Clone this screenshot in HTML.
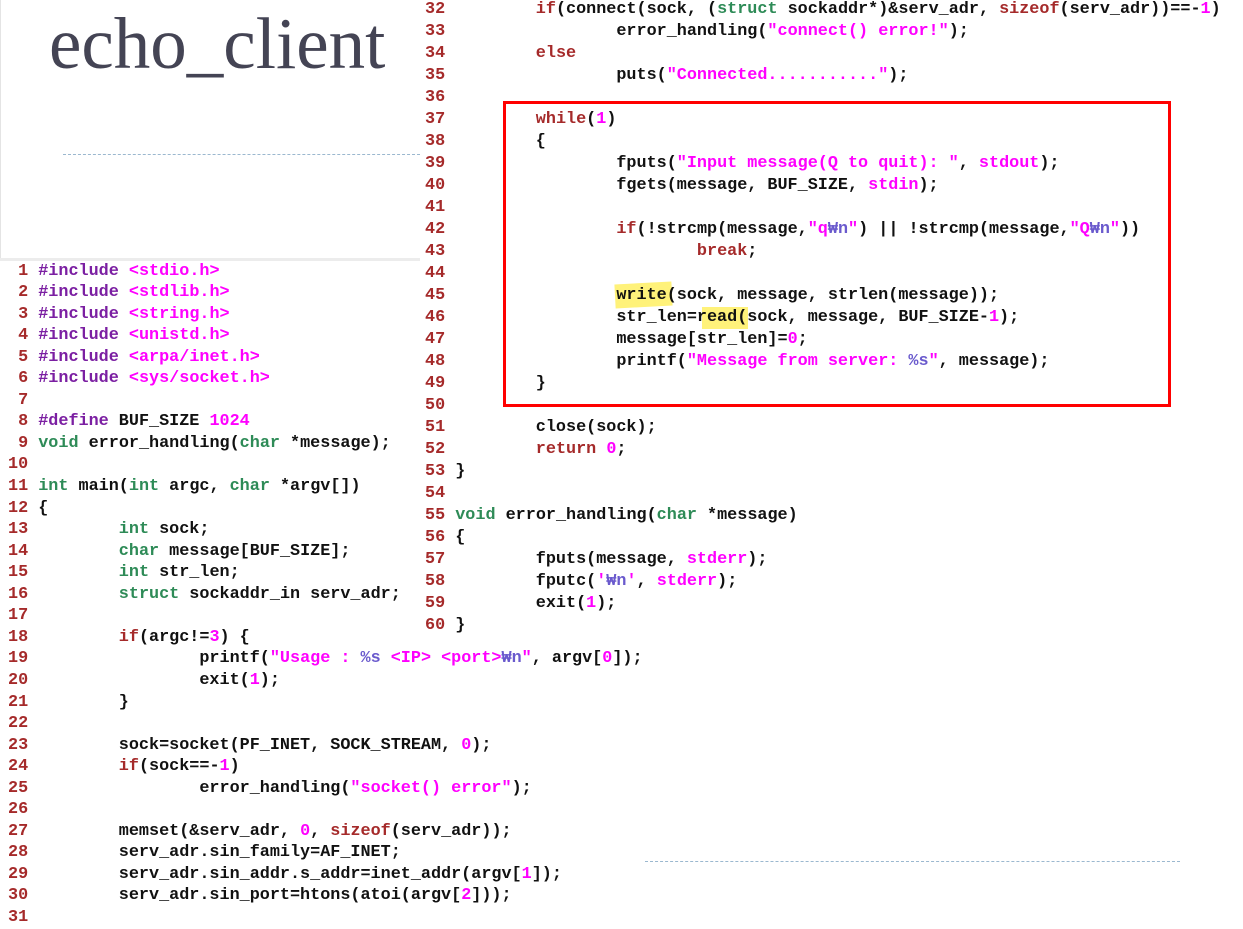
<!DOCTYPE html>
<html><head><meta charset="utf-8"><style>
body{margin:0;width:1243px;height:925px;background:#fff;position:relative;overflow:hidden;font-family:"Liberation Mono",monospace;}
.l{position:absolute;white-space:pre;font-weight:bold;font-size:16.8px;color:#111;}
.n{color:#a52a2a}.k{color:#a52a2a}.t{color:#2e8b57}.p{color:#7b1fa2}.s{color:#f0f}.e{color:#6a5acd}.d{color:#f0f}
</style></head><body>
<div style="position:absolute;left:0;top:0;width:1px;height:258px;background:#e4e4e4"></div>
<div style="position:absolute;left:0;top:258px;width:420px;height:3px;background:#ececec"></div>
<div style="position:absolute;left:49px;top:7px;font-family:'Liberation Serif',serif;font-size:73px;line-height:1;color:#444454;">echo_client</div>
<div style="position:absolute;left:63px;top:154px;width:357px;border-top:1px dashed #9bb8cf"></div>
<div style="position:absolute;left:645px;top:861px;width:535px;border-top:1px dashed #9bb8cf"></div>
<div style="position:absolute;left:615px;top:283px;width:57px;height:24px;background:#fff27a;transform:rotate(-3deg)"></div>
<div style="position:absolute;left:702px;top:307px;width:46px;height:22px;background:#fff27a"></div>
<div style="position:absolute;left:503px;top:101px;width:662px;height:300px;border:3px solid #f00"></div>
<div id="L"></div>
<script>
var W='<span style="font-family:\'Liberation Mono\',\'Noto Sans CJK KR\',monospace">₩</span>n';
var L=[
'<span class="p">#include</span> <span class="s">&lt;stdio.h&gt;</span>',
'<span class="p">#include</span> <span class="s">&lt;stdlib.h&gt;</span>',
'<span class="p">#include</span> <span class="s">&lt;string.h&gt;</span>',
'<span class="p">#include</span> <span class="s">&lt;unistd.h&gt;</span>',
'<span class="p">#include</span> <span class="s">&lt;arpa/inet.h&gt;</span>',
'<span class="p">#include</span> <span class="s">&lt;sys/socket.h&gt;</span>',
'',
'<span class="p">#define</span> BUF_SIZE <span class="d">1024</span>',
'<span class="t">void</span> error_handling(<span class="t">char</span> *message);',
'',
'<span class="t">int</span> main(<span class="t">int</span> argc, <span class="t">char</span> *argv[])',
'{',
'        <span class="t">int</span> sock;',
'        <span class="t">char</span> message[BUF_SIZE];',
'        <span class="t">int</span> str_len;',
'        <span class="t">struct</span> sockaddr_in serv_adr;',
'',
'        <span class="k">if</span>(argc!=<span class="d">3</span>) {',
'                printf(<span class="s">"Usage : </span><span class="e">%s</span><span class="s"> &lt;IP&gt; &lt;port&gt;</span><span class="e">'+W+'</span><span class="s">"</span>, argv[<span class="d">0</span>]);',
'                exit(<span class="d">1</span>);',
'        }',
'',
'        sock=socket(PF_INET, SOCK_STREAM, <span class="d">0</span>);',
'        <span class="k">if</span>(sock==-<span class="d">1</span>)',
'                error_handling(<span class="s">"socket() error"</span>);',
'',
'        memset(&amp;serv_adr, <span class="d">0</span>, <span class="k">sizeof</span>(serv_adr));',
'        serv_adr.sin_family=AF_INET;',
'        serv_adr.sin_addr.s_addr=inet_addr(argv[<span class="d">1</span>]);',
'        serv_adr.sin_port=htons(atoi(argv[<span class="d">2</span>]));',
''];
var R=[
'        <span class="k">if</span>(connect(sock, (<span class="t">struct</span> sockaddr*)&amp;serv_adr, <span class="k">sizeof</span>(serv_adr))==-<span class="d">1</span>)',
'                error_handling(<span class="s">"connect() error!"</span>);',
'        <span class="k">else</span>',
'                puts(<span class="s">"Connected..........."</span>);',
'',
'        <span class="k">while</span>(<span class="d">1</span>)',
'        {',
'                fputs(<span class="s">"Input message(Q to quit): "</span>, <span class="s">stdout</span>);',
'                fgets(message, BUF_SIZE, <span class="s">stdin</span>);',
'',
'                <span class="k">if</span>(!strcmp(message,<span class="s">"q</span><span class="e">'+W+'</span><span class="s">"</span>) || !strcmp(message,<span class="s">"Q</span><span class="e">'+W+'</span><span class="s">"</span>))',
'                        <span class="k">break</span>;',
'',
'                write(sock, message, strlen(message));',
'                str_len=read(sock, message, BUF_SIZE-<span class="d">1</span>);',
'                message[str_len]=<span class="d">0</span>;',
'                printf(<span class="s">"Message from server: </span><span class="e">%s</span><span class="s">"</span>, message);',
'        }',
'',
'        close(sock);',
'        <span class="k">return</span> <span class="d">0</span>;',
'}',
'',
'<span class="t">void</span> error_handling(<span class="t">char</span> *message)',
'{',
'        fputs(message, <span class="s">stderr</span>);',
'        fputc(<span class="s">\'</span><span class="e">'+W+'</span><span class="s">\'</span>, <span class="s">stderr</span>);',
'        exit(<span class="d">1</span>);',
'}'];
var h='';
function pad(n){return (n<10?' ':'')+n;}
L.forEach(function(c,i){h+='<div class="l" style="left:8px;top:'+(260.5+i*21.55)+'px;line-height:22px"><span class="n">'+pad(i+1)+'</span> '+c+'</div>';});
R.forEach(function(c,i){h+='<div class="l" style="left:425px;top:'+(-1+i*22)+'px;line-height:22px"><span class="n">'+(i+32)+'</span> '+c+'</div>';});
document.getElementById('L').innerHTML=h;
</script>
</body></html>
